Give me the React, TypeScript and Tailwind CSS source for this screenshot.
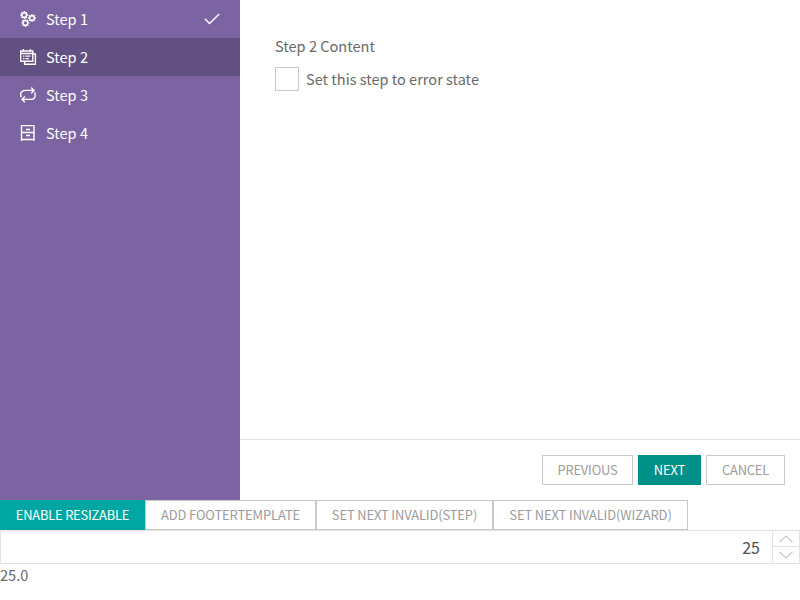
import React from "react";

const GEAR_TEETH = [0, 45, 90, 135, 180, 225, 270, 315];

function Gear({ x, y }: { x: number; y: number }) {
  return (
    <g transform={`translate(${x} ${y})`}>
      <circle r="2.35" strokeWidth="1.5" />
      {GEAR_TEETH.map((a) => (
        <path key={a} d="M0 -2.8V-4" strokeWidth="1.3" transform={`rotate(${a})`} />
      ))}
    </g>
  );
}

const svgProps = { width: 18, height: 18, viewBox: "0 0 18 18", fill: "none", stroke: "#fff", strokeWidth: 1.4 };

function GearsIcon() {
  return (
    <svg {...svgProps} className="shrink-0 overflow-visible">
      <Gear x={4.2} y={5} />
      <Gear x={12} y={8} />
      <Gear x={5.4} y={12.9} />
    </svg>
  );
}

function CalendarsIcon() {
  return (
    <svg {...svgProps} className="shrink-0">
      <path d="M.7 3H12.8V13.3H.7ZM.7 5.5H12.8M3.5 1V4M10.3 1V4M4.6 13.5V16.3H15.4V6H12.8" />
      <path d="M3 8.2H4.5M5.5 8.2H10.5M3 10.7H4.5M5.5 10.7H9" strokeWidth="1.2" />
    </svg>
  );
}

function LoopIcon() {
  return (
    <svg {...svgProps} className="shrink-0">
      <path d="M1.2 11.2C-.1 7.2 1.3 4.4 5.3 4.4H13.6M11.2 1.6L14 4.4L11.2 7.2" />
      <path d="M14.8 6.4C16.2 10.8 14.5 13.4 10.8 13.4H2.4M4.9 10.6L2.1 13.4L4.9 16.2" />
    </svg>
  );
}

function CabinetIcon() {
  return (
    <svg {...svgProps} className="shrink-0">
      <path d="M1.5 17V1.6H14V17M1.5 8.5H14M1.5 15.5H14M6 5.5H10M6 11.5H10" />
    </svg>
  );
}

const steps = [
  { label: "Step 1", Icon: GearsIcon, done: true },
  { label: "Step 2", Icon: CalendarsIcon, active: true },
  { label: "Step 3", Icon: LoopIcon },
  { label: "Step 4", Icon: CabinetIcon },
];

const buttonBase = "flex h-[30px] items-center justify-center whitespace-nowrap border text-[12.9px]";
const tight = "tracking-[-0.2px]";
const plain = "border-[#c9c9c9] bg-white text-[#9c9c9c]";

export default function App() {
  return (
    <div className="h-[600px] w-[800px] overflow-hidden bg-white font-['Noto_Sans_CJK_SC',sans-serif] text-[14.55px] leading-6 text-[#6a6a6a]">
      <div className="flex h-[500px]">
        <nav className="w-60 bg-[#7c64a2]">
          {steps.map(({ label, Icon, done, active }) => (
            <div key={label} className={`flex h-[38px] items-center pr-5 pl-5 text-white ${active ? "bg-[#635083]" : ""}`}>
              <Icon />
              <span className="ml-2 flex-1">{label}</span>
              {done && (
                <svg width="16" height="14" viewBox="0 0 16 14" fill="none" stroke="#fff" strokeWidth="1.4">
                  <path d="M.8 6.8L5.5 11.5L15.2 2" />
                </svg>
              )}
            </div>
          ))}
        </nav>
        <section className="flex flex-1 flex-col">
          <div className="flex-1 px-[35px] pt-[34px]">
            <p>Step 2 Content</p>
            <label className="mt-[9px] flex items-center">
              <input type="checkbox" className="size-6 appearance-none border border-[#c9c9c9]" />
              <span className="ml-[7px]">Set this step to error state</span>
            </label>
          </div>
          <footer className="flex h-[61px] items-start justify-end gap-[5px] border-t border-[#e2e2e2] pt-[15px] pr-[15px]">
            <button className={`${buttonBase} ${tight} ${plain} w-[91px]`}>PREVIOUS</button>
            <button className={`${buttonBase} w-[63px] border-[#009087] bg-[#009087] tracking-[-0.1px] text-white`}>NEXT</button>
            <button className={`${buttonBase} ${tight} ${plain} w-[79px]`}>CANCEL</button>
          </footer>
        </section>
      </div>
      <div className="flex">
        <button className={`${buttonBase} ${tight} w-[145px] border-[#00a7a2] bg-[#00a7a2] text-white`}>ENABLE RESIZABLE</button>
        <button className={`${buttonBase} tracking-[-0.1px] ${plain} w-[171px]`}>ADD FOOTERTEMPLATE</button>
        <button className={`${buttonBase} tracking-[-0.12px] ${plain} w-[177px]`}>SET NEXT INVALID(STEP)</button>
        <button className={`${buttonBase} tracking-[-0.1px] ${plain} w-[195px]`}>SET NEXT INVALID(WIZARD)</button>
      </div>
      <div className="flex h-[34px] border border-[#e2e2e2]">
        <div className="flex flex-1 items-center justify-end pr-3 text-[16px] text-[#4f4f4f]">25</div>
        <div className="w-[27px] border-l border-[#e2e2e2]">
          <div className="flex h-4 items-center justify-center border-b border-[#e2e2e2]">
            <svg width="14" height="8" viewBox="0 0 14 8" fill="none" stroke="#c9c9c9" strokeWidth="1.2"><path d="M.5 7L7 1L13.5 7" /></svg>
          </div>
          <div className="flex h-4 items-center justify-center">
            <svg width="14" height="8" viewBox="0 0 14 8" fill="none" stroke="#c9c9c9" strokeWidth="1.2"><path d="M.5 1L7 7L13.5 1" /></svg>
          </div>
        </div>
      </div>
      <div className="leading-[22px]">25.0</div>
    </div>
  );
}
